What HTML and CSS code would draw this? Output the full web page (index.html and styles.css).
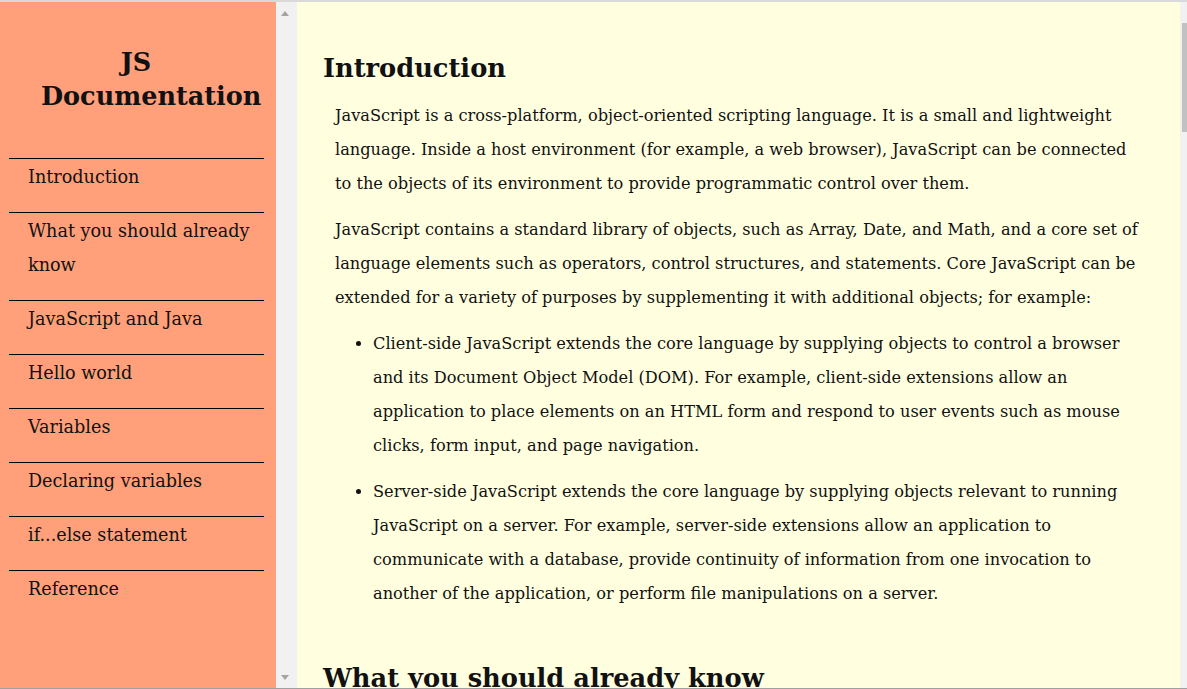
FILE: index.html
```html
<!DOCTYPE html>
<html lang="en">
<head>
<meta charset="utf-8">
<title>JS Documentation</title>
<link rel="stylesheet" href="styles.css">
</head>
<body>
<div class="frame">
  <nav class="sidebar" id="navbar">
    <header class="sidebar-title">JS Documentation</header>
    <ul class="nav-list">
      <li class="nav-item"><a class="nav-link" href="#Introduction">Introduction</a></li>
      <li class="nav-item"><a class="nav-link" href="#What_you_should_already_know">What you should already know</a></li>
      <li class="nav-item"><a class="nav-link" href="#JavaScript_and_Java">JavaScript and Java</a></li>
      <li class="nav-item"><a class="nav-link" href="#Hello_world">Hello world</a></li>
      <li class="nav-item"><a class="nav-link" href="#Variables">Variables</a></li>
      <li class="nav-item"><a class="nav-link" href="#Declaring_variables">Declaring variables</a></li>
      <li class="nav-item"><a class="nav-link" href="#if...else_statement">if...else statement</a></li>
      <li class="nav-item"><a class="nav-link" href="#Reference">Reference</a></li>
    </ul>
  </nav>
  <div class="fake-scroll">
    <span class="arrow-up"></span>
    <span class="arrow-down"></span>
  </div>
  <main class="main" id="main-doc">
    <section class="main-section" id="Introduction">
      <header class="section-title">Introduction</header>
      <p class="text">JavaScript is a cross-platform, object-oriented scripting language. It is a small and lightweight language. Inside a host environment (for example, a web browser), JavaScript can be connected to the objects of its environment to provide programmatic control over them.</p>
      <p class="text">JavaScript contains a standard library of objects, such as Array, Date, and Math, and a core set of language elements such as operators, control structures, and statements. Core JavaScript can be extended for a variety of purposes by supplementing it with additional objects; for example:</p>
      <ul class="bullets">
        <li class="bullet">Client-side JavaScript extends the core language by supplying objects to control a browser and its Document Object Model (DOM). For example, client-side extensions allow an application to place elements on an HTML form and respond to user events such as mouse clicks, form input, and page navigation.</li>
        <li class="bullet">Server-side JavaScript extends the core language by supplying objects relevant to running JavaScript on a server. For example, server-side extensions allow an application to communicate with a database, provide continuity of information from one invocation to another of the application, or perform file manipulations on a server.</li>
      </ul>
    </section>
    <section class="main-section" id="What_you_should_already_know">
      <header class="section-title">What you should already know</header>
      <p class="text">This guide assumes you have the following basic background:</p>
    </section>
  </main>
  <div class="right-scroll">
    <span class="thumb"></span>
  </div>
</div>
</body>
</html>
```

FILE: styles.css
```css
html, body {
  margin: 0;
  padding: 0;
  height: 100%;
  overflow: hidden;
}

body {
  font-family: "DejaVu Serif", Georgia, serif;
  color: #111;
  background: #ffffe0;
  border-top: 2px solid #d9d9d9;
  border-bottom: 1px solid #a0a0a0;
  box-sizing: border-box;
}

.frame {
  display: flex;
  height: 100%;
  overflow: hidden;
}

.sidebar {
  flex: 0 0 276px;
  width: 276px;
  min-width: 0;
  background: #ffa07a;
  padding: 43px 12px 0 9px;
  box-sizing: border-box;
}

.sidebar-title {
  font-weight: bold;
  font-size: 25.5px;
  line-height: 34px;
  text-align: center;
  margin: 0 33px 0 32px;
  padding-bottom: 45px;
}

.nav-list {
  list-style: none;
  margin: 0;
  padding: 0;
}

.nav-item {
  border-top: 1px solid #000;
  padding: 1px 0 18px 19px;
  font-size: 17.6px;
  line-height: 34px;
}

.nav-link {
  color: #111;
  text-decoration: none;
}

.fake-scroll {
  flex: 0 0 21px;
  background: #f1f1f1;
  position: relative;
}

.arrow-up,
.arrow-down {
  position: absolute;
  left: 5px;
  width: 0;
  height: 0;
  border-left: 4.5px solid transparent;
  border-right: 4.5px solid transparent;
}

.arrow-up {
  top: 9px;
  border-bottom: 5px solid #a3a3a3;
}

.arrow-down {
  bottom: 8px;
  border-top: 5px solid #a3a3a3;
}

.main {
  flex: 1 1 auto;
  min-width: 0;
  background: #ffffe0;
  padding: 48px 38px 0 26px;
  overflow: hidden;
}

.main-section {
  padding-bottom: 37px;
}

.section-title {
  font-weight: bold;
  font-size: 25.7px;
  line-height: 36px;
  margin-bottom: 13px;
}

.text {
  font-size: 16.2px;
  line-height: 34px;
  margin: 0 0 12px 12px;
}

.bullets {
  margin: 0;
  padding: 0 0 0 50px;
  font-size: 16.2px;
  line-height: 34px;
}

.bullet {
  margin-bottom: 12px;
}

.right-scroll {
  flex: 0 0 7px;
  background: #f1f1f1;
  position: relative;
}

.thumb {
  position: absolute;
  left: 2px;
  right: 0;
  top: 21px;
  height: 109px;
  background: #c1c1c1;
}
```
